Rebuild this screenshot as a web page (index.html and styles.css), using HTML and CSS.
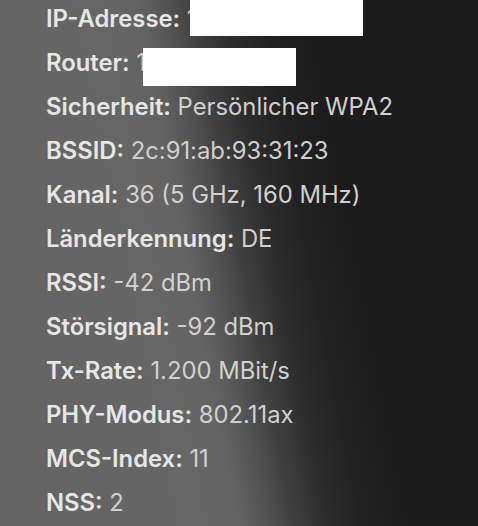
FILE: index.html
```html
<!DOCTYPE html>
<html lang="de">
<head>
<meta charset="utf-8">
<link rel="stylesheet" href="styles.css">
</head>
<body>
<div class="panel">
  <div class="row"><span class="label">IP-Adresse:</span> <span class="value">1</span></div>
  <div class="row"><span class="label">Router:</span> <span class="value">1</span></div>
  <div class="row"><span class="label">Sicherheit:</span> <span class="value">Persönlicher WPA2</span></div>
  <div class="row"><span class="label">BSSID:</span> <span class="value">2c:91:ab:93:31:23</span></div>
  <div class="row"><span class="label">Kanal:</span> <span class="value">36 (5 GHz, 160 MHz)</span></div>
  <div class="row"><span class="label">Länderkennung:</span> <span class="value">DE</span></div>
  <div class="row"><span class="label">RSSI:</span> <span class="value">-42 dBm</span></div>
  <div class="row"><span class="label">Störsignal:</span> <span class="value">-92 dBm</span></div>
  <div class="row"><span class="label">Tx-Rate:</span> <span class="value">1.200 MBit/s</span></div>
  <div class="row"><span class="label">PHY-Modus:</span> <span class="value">802.11ax</span></div>
  <div class="row"><span class="label">MCS-Index:</span> <span class="value">11</span></div>
  <div class="row"><span class="label">NSS:</span> <span class="value">2</span></div>
</div>
<div class="redact redact-ip"></div>
<div class="redact redact-router"></div>
</body>
</html>
```
FILE: styles.css
```css
html, body {
  margin: 0;
  padding: 0;
  height: 100%;
}
body {
  position: relative;
  overflow: hidden;
  background: linear-gradient(79deg,
    #646464 0px,
    #666666 200px,
    #636363 235px,
    #555555 260px,
    #404040 288px,
    #2d2d2d 320px,
    #222222 355px,
    #1c1c1c 400px,
    #1a1a1a 100%);
  font-family: Inter, "Noto Sans", sans-serif;
}
.panel {
  display: flex;
  flex-direction: column;
  padding-left: 46px;
  margin-top: -3px;
}
.row {
  font-size: 23.8px;
  line-height: 44px;
  white-space: nowrap;
}
.label {
  font-weight: 600;
  color: #e6e6e6;
}
.value {
  font-weight: 400;
  color: #d0d0d0;
}
.redact {
  position: absolute;
  background: #ffffff;
}
.redact-ip {
  left: 190px;
  top: 0;
  width: 173px;
  height: 36px;
}
.redact-router {
  left: 143px;
  top: 48px;
  width: 153px;
  height: 38px;
}
```
